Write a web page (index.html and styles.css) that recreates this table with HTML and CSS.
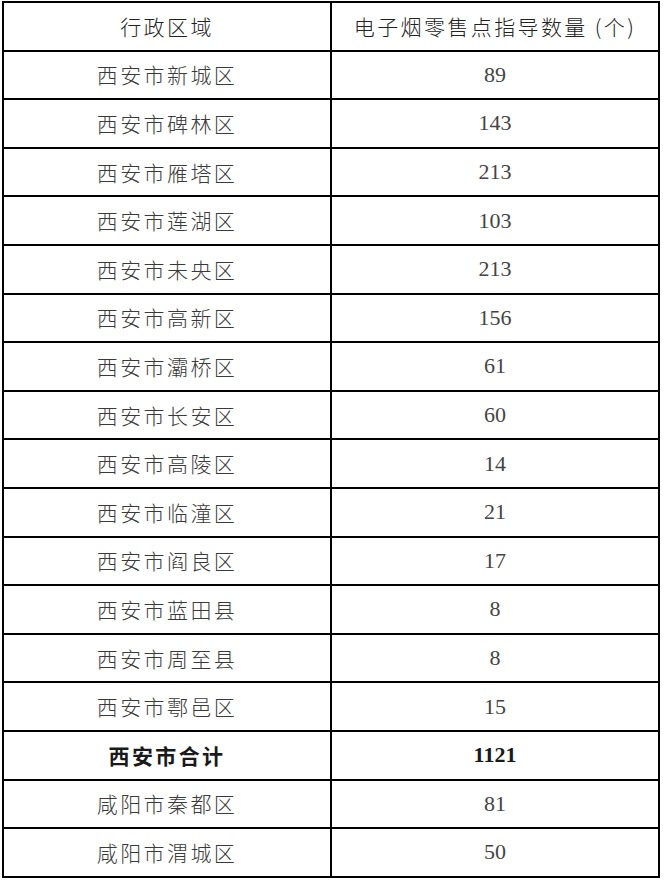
FILE: index.html
```html
<!DOCTYPE html>
<html lang="zh-CN">
<head>
<meta charset="utf-8">
<title>电子烟零售点指导数量</title>
<link rel="stylesheet" href="styles.css">
</head>
<body>
<table class="grid">
  <thead>
    <tr><th>行政区域</th><th>电子烟零售点指导数量 (个)</th></tr>
  </thead>
  <tbody>
    <tr><td>西安市新城区</td><td class="num">89</td></tr>
    <tr><td>西安市碑林区</td><td class="num">143</td></tr>
    <tr><td>西安市雁塔区</td><td class="num">213</td></tr>
    <tr><td>西安市莲湖区</td><td class="num">103</td></tr>
    <tr><td>西安市未央区</td><td class="num">213</td></tr>
    <tr><td>西安市高新区</td><td class="num">156</td></tr>
    <tr><td>西安市灞桥区</td><td class="num">61</td></tr>
    <tr><td>西安市长安区</td><td class="num">60</td></tr>
    <tr><td>西安市高陵区</td><td class="num">14</td></tr>
    <tr><td>西安市临潼区</td><td class="num">21</td></tr>
    <tr><td>西安市阎良区</td><td class="num">17</td></tr>
    <tr><td>西安市蓝田县</td><td class="num">8</td></tr>
    <tr><td>西安市周至县</td><td class="num">8</td></tr>
    <tr><td>西安市鄠邑区</td><td class="num">15</td></tr>
    <tr class="total"><td>西安市合计</td><td class="num">1121</td></tr>
    <tr><td>咸阳市秦都区</td><td class="num">81</td></tr>
    <tr><td>咸阳市渭城区</td><td class="num">50</td></tr>
  </tbody>
</table>
</body>
</html>
```

FILE: styles.css
```css
html, body {
  margin: 0;
  padding: 0;
  background: #fff;
}

body {
  padding: 1px 0 0 2px;
  font-family: "Noto Sans CJK SC", "Noto Sans", sans-serif;
}

.grid {
  border-collapse: collapse;
  width: 658px;
  table-layout: fixed;
}

.grid th,
.grid td {
  border: 2px solid #000;
  height: 46.6px;
  padding: 0;
  text-align: center;
  vertical-align: middle;
  font-size: 21px;
  font-weight: 300;
  letter-spacing: 2.4px;
  color: #3a3a3a;
  line-height: 1;
}

.grid th {
  color: #222;
  font-weight: 300;
}

.grid td.num {
  font-family: "Liberation Serif", serif;
  font-size: 22px;
  letter-spacing: 0;
  color: #444;
}

.grid tr.total td {
  font-weight: 700;
  color: #1a1a1a;
}
```
